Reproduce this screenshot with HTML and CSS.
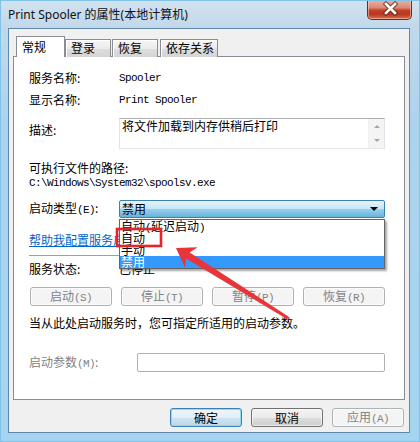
FILE: index.html
```html
<!DOCTYPE html>
<html lang="zh-CN">

<head>
    <meta charset="UTF-8">
    <meta name="viewport" content="width=device-width, initial-scale=1.0">

    <link rel="stylesheet" href="styles.css">
    <title>Print Spooler 的属性(本地计算机)</title>
</head>

<body>

    <div class="window">

        <div class="titlebar"> <!-- barra de titulo -->
            <div class="title">Print Spooler 的属性(本地计算机)</div>
            <div class="close">
                <svg width="45" height="20" viewBox="0 0 45 20">
                    <path d="M18 5 L27 14 M27 5 L18 14" stroke="#5a1f14" stroke-width="4.6" stroke-linecap="square" opacity="0.7" />
                    <path d="M18 5 L27 14 M27 5 L18 14" stroke="#ffffff" stroke-width="2.6" stroke-linecap="square" />
                </svg>
            </div>
        </div>

        <div class="client">

            <div class="tabs">
                <div class="tab active">常规</div>
                <div class="tab t2">登录</div>
                <div class="tab t3">恢复</div>
                <div class="tab t4">依存关系</div>
            </div>

            <div class="panel"> <!-- aba geral -->

                <div class="row first">
                    <span class="label">服务名称:</span>
                    <span class="mono">Spooler</span>
                </div>

                <div class="row second">
                    <span class="label">显示名称:</span>
                    <span class="mono">Print Spooler</span>
                </div>

                <div class="row desc-row">
                    <span class="label desc-label">描述:</span>
                    <div class="desc">
                        <div class="desc-text">将文件加载到内存供稍后打印</div>
                        <div class="scroll">
                            <span class="arrow-up"></span>
                            <span class="arrow-down"></span>
                        </div>
                    </div>
                </div>

                <div class="line path-label">可执行文件的路径:</div>
                <div class="line path mono">C:\Windows\System32\spoolsv.exe</div>

                <div class="row type-row">
                    <span class="label">启动类型<span class="mono">(E)</span>:</span>
                    <div class="combo">
                        <span>禁用</span>
                        <span class="combo-arrow"></span>
                        <ul class="droplist">
                            <li>自动<span class="mono">(</span>延迟启动<span class="mono">)</span></li>
                            <li>自动</li>
                            <li>手动</li>
                            <li class="selected">禁用</li>
                        </ul>
                    </div>
                </div>

                <div class="line help"><a href="#">帮助我配置服务启动选项。</a></div>

                <div class="sep"></div>

                <div class="row status">
                    <span class="label">服务状态:</span>
                    <span>已停止</span>
                </div>

                <div class="svc-buttons">
                    <button disabled>启动<span class="mono">(S)</span></button>
                    <button disabled>停止<span class="mono">(T)</span></button>
                    <button disabled>暂停<span class="mono">(P)</span></button>
                    <button disabled>恢复<span class="mono">(R)</span></button>
                </div>

                <div class="line hint">当从此处启动服务时，您可指定所适用的启动参数。</div>

                <div class="row param-row">
                    <span class="label param-label disabled">启动参数<span class="mono">(M)</span>:</span>
                    <div class="param-input"></div>
                </div>

            </div> <!-- fim aba geral -->

            <div class="dlg-buttons">
                <button class="default">确定</button>
                <button>取消</button>
                <button disabled>应用<span class="mono">(A)</span></button>
            </div>

        </div>

        <!-- anotacao vermelha por cima da janela -->
        <svg class="annotation" width="420" height="442" viewBox="0 0 420 442">
            <rect x="117" y="229" width="44" height="17" fill="none" stroke="#e4262a" stroke-width="2.6" />
            <polygon fill="#e8353a"
                points="176,248 197.6,247.3 189.7,252.4 288.8,316.7 287.2,319.3 186,258.4 185,267.7" />
        </svg>

    </div>

</body>

</html>
```

FILE: styles.css
```css
* {
    box-sizing: border-box;
}

body {
    margin: 0;
    font-family: "Noto Sans CJK SC", sans-serif;
    font-size: 12px;
    color: #000;
}

.window {
    position: relative;
    width: 420px;
    height: 442px;
    overflow: hidden;
    background: linear-gradient(180deg, #d2e2ee 0px, #c0d8eb 28px, #acd3ee 120px, #a5d4f0 100%);
    border: 1px solid #7fc3e8;
}

.titlebar {
    display: flex;
    height: 27px;
}

.title {
    padding: 2px 0 0 7px;
    line-height: 24px;
    font-family: "Noto Sans", "Noto Sans CJK SC", sans-serif;
    font-size: 12px;
    color: #111;
}

.close {
    margin: -1px 7px 0 auto;
    width: 45px;
    height: 20px;
    border: 1px solid #6a2a20;
    border-top: none;
    border-radius: 0 0 5px 5px;
    background: linear-gradient(180deg, #eab3a6 0%, #d98a74 40%, #c0412a 55%, #b8371f 75%, #d8704c 100%);
    box-shadow: inset 0 0 0 1px rgba(255, 220, 210, 0.5);
}

.close svg {
    display: block;
    margin-top: -1px;
}

.client {
    margin-left: 7px;
    width: 402px;
    height: 405px;
    padding: 7px 4px 0 4px;
    background: #f0f0f0;
    border: 1px solid #5f86ab;
}

/* abas */

.tabs {
    display: flex;
    align-items: flex-end;
    height: 21px;
    margin-bottom: -1px;
}

.tab {
    height: 18px;
    padding-left: 5px;
    line-height: 16px;
    border: 1px solid #898c95;
    border-bottom: none;
    background: linear-gradient(180deg, #f6f6f6 0%, #ebebeb 50%, #dedede 50%, #d4d4d4 100%);
    box-shadow: inset 1px 1px 0 #fff;
}

.tab.active {
    position: relative;
    z-index: 1;
    height: 21px;
    width: 49px;
    margin-left: 3px;
    line-height: 19px;
    background: #fff;
    box-shadow: none;
}

.t2 {
    width: 46px;
}

.t3 {
    width: 46px;
    margin-left: 1px;
}

.t4 {
    width: 58px;
    margin-left: 2px;
}

.panel {
    display: flex;
    flex-direction: column;
    height: 344px;
    padding: 14px 19px 0 15px;
    background: #fff;
    border: 1px solid #898c95;
}

.row {
    display: flex;
    align-items: center;
}

.line,
.row span {
    line-height: 14px;
}

.label {
    width: 90px;
    flex: none;
}

.mono {
    font-family: "Liberation Mono", monospace;
    font-size: 11px;
    letter-spacing: -0.6px;
}

.first {
    margin-top: 0;
}

.second {
    margin-top: 8px;
}

.desc-row {
    margin-top: 11px;
    align-items: flex-start;
}

.desc-label {
    padding-top: 5px;
}

.desc {
    display: flex;
    width: 266px;
    height: 31px;
    border: 1px solid #e2e3ea;
    border-top-color: #abadb3;
    border-bottom-color: #e3e9ef;
}

.desc-text {
    flex: 1;
    padding: 0 2px;
    line-height: 14px;
}

.scroll {
    display: flex;
    flex-direction: column;
    justify-content: space-around;
    align-items: center;
    width: 16px;
    background: #f4f4f4;
    border-left: 1px solid #f0f0f0;
}

.arrow-up,
.arrow-down {
    width: 0;
    height: 0;
    border-left: 3px solid transparent;
    border-right: 3px solid transparent;
}

.arrow-up {
    border-bottom: 3px solid #a5a5a5;
}

.arrow-down {
    border-top: 3px solid #a5a5a5;
}

.path-label {
    margin-top: 12px;
}

.path {
    margin-top: 1px;
}

.type-row {
    margin-top: 10px;
}

.combo {
    position: relative;
    width: 266px;
    height: 18px;
    padding-left: 2px;
    line-height: 16px;
    border: 1px solid #3c7fb1;
    border-radius: 2px;
    background: linear-gradient(180deg, #e5f4fc 0%, #c4e5f6 50%, #98d1ef 50%, #68b3db 100%);
}

.combo-arrow {
    position: absolute;
    right: 6px;
    top: 6px;
    border-left: 4px solid transparent;
    border-right: 4px solid transparent;
    border-top: 4px solid #000;
}

.droplist {
    position: absolute;
    top: 18px;
    left: -1px;
    width: 266px;
    margin: 0;
    padding: 0;
    list-style: none;
    background: #fff;
    border: 1px solid #646464;
    box-shadow: 2px 2px 2px rgba(0, 0, 0, 0.35);
    z-index: 2;
}

.droplist li {
    height: 12px;
    padding-left: 1px;
    line-height: 12px;
}

.droplist .selected {
    background: #3399ff;
    color: #fff;
}

.help {
    margin-top: 15px;
}

.help a {
    color: #0066cc;
}

.sep {
    margin-top: 8px;
    height: 2px;
    border-top: 1px solid #a0a0a0;
    border-bottom: 1px solid #fff;
}

.status {
    margin-top: 5px;
}

.svc-buttons {
    display: grid;
    grid-template-columns: repeat(4, 1fr);
    gap: 9px;
    margin-top: 11px;
    padding-left: 1px;
}

button {
    height: 19px;
    padding: 0;
    font-family: "Noto Sans CJK SC", sans-serif;
    font-size: 12px;
    line-height: 15px;
    color: #000;
    border: 1px solid #707070;
    border-radius: 3px;
    background: linear-gradient(180deg, #f2f2f2 0%, #ebebeb 50%, #dddddd 50%, #cfcfcf 100%);
    box-shadow: inset 0 0 0 1px rgba(255, 255, 255, 0.6);
}

button:disabled {
    color: #838383;
    border-color: #adb2b5;
    background: #f4f4f4;
}

.hint {
    margin-top: 10px;
}

.param-row {
    margin-top: 23px;
}

.param-label {
    width: 108px;
}

.disabled {
    color: #838383;
}

.param-input {
    width: 248px;
    height: 19px;
    border: 1px solid #adb2b5;
    border-radius: 2px;
    background: #fff;
}

.dlg-buttons {
    display: flex;
    justify-content: flex-end;
    gap: 9px;
    margin-top: 8px;
    padding-right: 1px;
}

.dlg-buttons button {
    width: 72px;
}

.dlg-buttons .default {
    border-color: #3c7fb1;
    background: linear-gradient(180deg, #eef6fb 0%, #e2eef6 50%, #cfe3f0 50%, #bcd8ea 100%);
    box-shadow: inset 0 0 0 1px #8fdcf8;
}

.annotation {
    position: absolute;
    left: -1px;
    top: -1px;
    z-index: 3;
    pointer-events: none;
}
```
